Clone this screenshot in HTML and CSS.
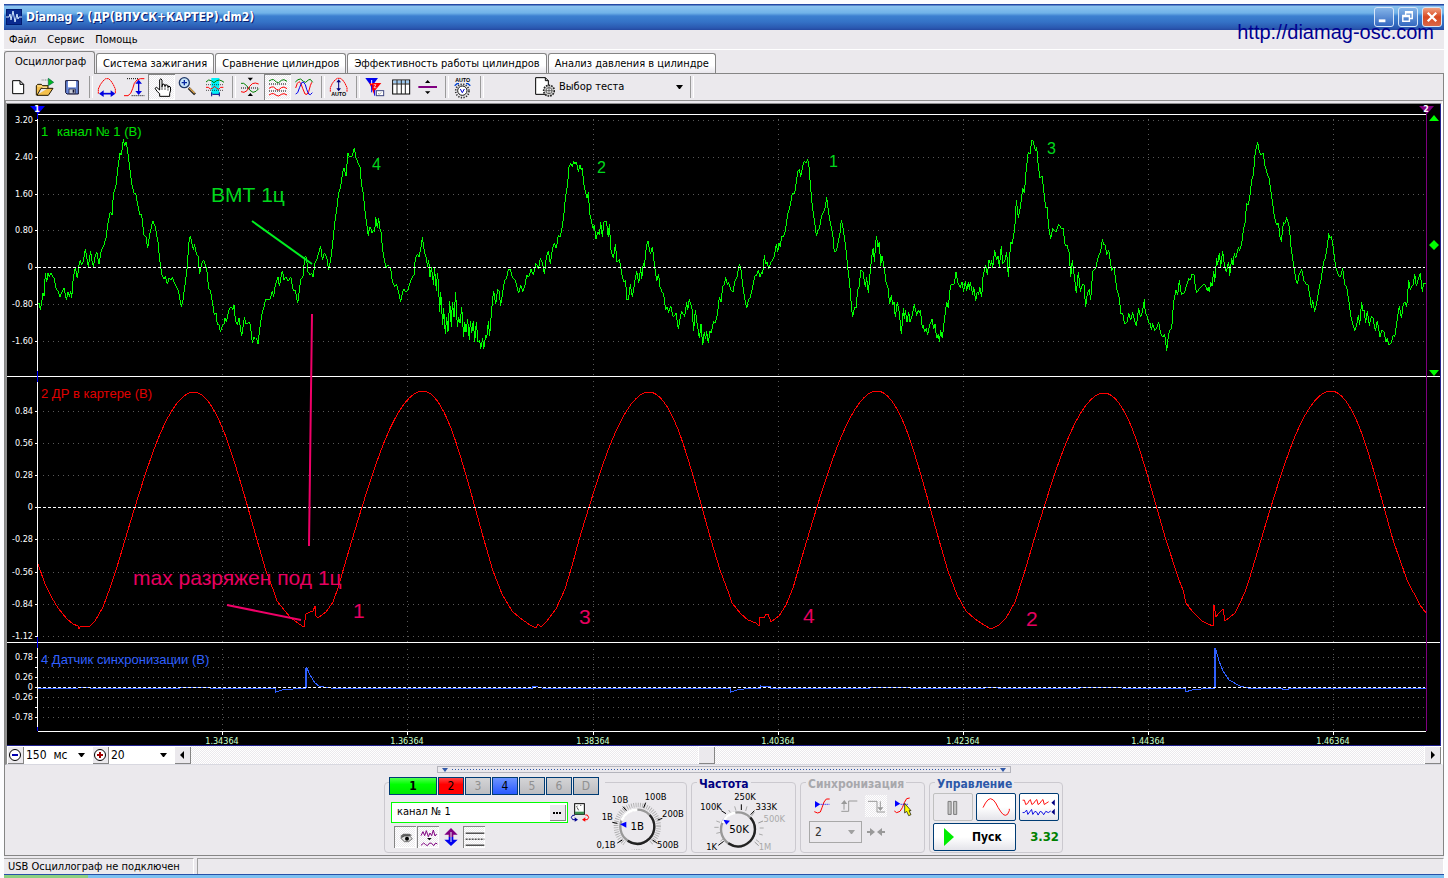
FILE: index.html
```html
<!DOCTYPE html>
<html lang="ru">
<head>
<meta charset="utf-8">
<title>Diamag 2</title>
<link rel="stylesheet" href="styles.css">
</head>
<body>
<div class="window">
  <header class="titlebar">
    <svg class="app-icon" viewBox="0 0 16 16" aria-hidden="true"><rect width="16" height="16" fill="#001a70"/><rect x="1" y="1" width="14" height="14" fill="#0a2a90"/><path d="M0 8h3l1-3 1 6 2-9 2 11 2-8 1 5 1-2h3" fill="none" stroke="#cfe6ff" stroke-width="1"/></svg>
    <h1 class="title">Diamag 2 (ДР(ВПУСК+КАРТЕР).dm2)</h1>
    <div class="window-buttons">
      <button class="win-btn" aria-label="Свернуть"><svg viewBox="0 0 19 19"><path d="M4 12h7v3H4z" fill="#fff"/></svg></button>
      <button class="win-btn" aria-label="Восстановить"><svg viewBox="0 0 19 19"><path d="M7 7V4h7v7h-3M7 5h7M4 8h7v6H4zM4 9h7" fill="none" stroke="#fff" stroke-width="1.5"/></svg></button>
      <button class="win-btn win-close" aria-label="Закрыть"><svg viewBox="0 0 19 19"><path d="M5 5l9 9M14 5l-9 9" stroke="#fff" stroke-width="2.4"/></svg></button>
    </div>
    <a class="site-link" href="http://diamag-osc.com">http://diamag-osc.com</a>
  </header>
  <nav class="menu">
    <button>Файл</button><button>Сервис</button><button>Помощь</button>
  </nav>
  <div class="tabs" role="tablist">
    <button class="tab tab-active" role="tab" aria-selected="true">Осциллограф</button>
    <button class="tab" role="tab">Система зажигания</button>
    <button class="tab" role="tab">Сравнение цилиндров</button>
    <button class="tab" role="tab">Эффективность работы цилиндров</button>
    <button class="tab" role="tab">Анализ давления в цилиндре</button>
  </div>
  <main class="page">
    <div class="toolbar">
      <button class="tool" aria-label="Новый"><svg viewBox="15 222 81 78"><path d="M38 242h22l11 11v28H38zM60 242v11h11" fill="#fff" stroke="#000" stroke-width="3"/></svg></button>
      <button class="tool" aria-label="Открыть"><svg viewBox="96 222 81 78"><path d="M109 286v-29l4-4h11l4 4h16v8M144 265h-21l-12 21h34l14-21z" fill="#f4c04c" stroke="#221800" stroke-width="3"/><path d="M112 258h12l4 4h13" stroke="#ffe9a8" stroke-width="3" fill="none"/><path d="M125 240h19" stroke="#555" stroke-width="2" stroke-dasharray="3 2"/><path d="M145 235v22l16-10z" fill="#00b820" stroke="#064" stroke-width="2"/></svg></button>
      <button class="tool" aria-label="Сохранить"><svg viewBox="177 222 81 78"><path d="M197 242h38v40h-34l-4-4z" fill="#6a88d8" stroke="#101030" stroke-width="3"/><path d="M204 243h24v19h-24z" fill="#fff"/><path d="M207 267h19v14h-19z" fill="#c8ccd8" stroke="#101030" stroke-width="2"/><path d="M218 269h5v9h-5z" fill="#101030"/></svg></button>
      <span class="sep"></span>
      <button class="tool" aria-label="Период"><svg viewBox="282 222 81 78"><path d="M295 281v-14l6-13 8-11 8-7h9l7 7 7 11 6 13v14" fill="none" stroke="#f00" stroke-width="3" stroke-dasharray="6 1"/><path d="M307 281h30" stroke="#0000e0" stroke-width="5"/><path d="M311 271v20l-14-10zM332 271v20l14-10z" fill="#0000e0"/></svg></button>
      <button class="tool" aria-label="Амплитуда"><svg viewBox="363 222 81 78"><path d="M381 236h36M395 287h38" stroke="#000" stroke-width="3" stroke-dasharray="3 3"/><path d="M372 287h12l8-7 6-14 5-16 8-10 10-4h12" fill="none" stroke="#f00" stroke-width="3"/><path d="M416 245v34" stroke="#0000c0" stroke-width="4"/><path d="M406 251h20l-10-12zM406 273h20l-10 12z" fill="#0000e0"/></svg></button>
      <button class="tool pressed" aria-label="Рука" aria-pressed="true"><svg viewBox="444 222 81 78"><path d="M479 289v-8l-7-6-7-10 5-3 9 8v-30l3-4 4 4v20l2-8 5 1 2 7 2-6 6 2 1 7 2-5 5 3 1 9-3 11v8z" fill="#fff" stroke="#000" stroke-width="3"/><path d="M486 258v12M495 262v8M504 265v7" stroke="#000" stroke-width="2"/></svg></button>
      <button class="tool" aria-label="Лупа"><svg viewBox="525 222 81 78"><path d="M566 264l19 19" stroke="#222" stroke-width="8"/><path d="M568 264l16 16" stroke="#e0a850" stroke-width="4"/><circle cx="553" cy="248" r="15" fill="#c8e4fa" stroke="#203868" stroke-width="4"/><path d="M545 248h16M553 240v16" stroke="#0828a0" stroke-width="4"/></svg></button>
      <button class="tool" aria-label="Область"><svg viewBox="606 222 81 78"><path d="M634 234h24v48h-24z" fill="#00f0f8"/><path d="M618 246l8-6 8 2 8 6 8-6 8-2 8 3 6 4" fill="none" stroke="#008000" stroke-width="3"/><path d="M618 254h54M618 271h54" stroke="#000" stroke-width="2" stroke-dasharray="3 3"/><path d="M618 262h7l6 5 6-2 7-6 6 6 6 3 6-6h8" fill="none" stroke="#f00" stroke-width="3"/><path d="M635 277v12M658 277v12M637 283h20" stroke="#000080" stroke-width="3"/></svg></button>
      <span class="sep"></span>
      <button class="tool" aria-label="Наложить"><svg viewBox="711 222 81 78"><path d="M723 250h8l9 7 10 14 9 6 9-3 8-8" fill="none" stroke="#008000" stroke-width="3"/><path d="M723 275l9 2 9-5 8-13 8-8 9-2 10 3" fill="none" stroke="#f00" stroke-width="3"/><path d="M723 264h54" stroke="#000" stroke-width="3" stroke-dasharray="3 3"/><path d="M743 233h16l-8 9zM743 288h16l-8-9z" fill="#000"/></svg></button>
      <button class="tool pressed" aria-label="Раздельно" aria-pressed="true"><svg viewBox="792 222 81 78"><g fill="none" stroke-width="3"><path d="M807 243l8-4h6l8 7 7 2 8-7 8-2 9 5" stroke="#008000"/><path d="M807 265l8-4h6l8 7 7 2 8-7 8-2 9 5" stroke="#f00"/><path d="M807 285l8-4h6l8 5 7 2 8-5 8-2 9 4" stroke="#f00"/><path d="M807 252h54M807 273h54" stroke="#000" stroke-dasharray="3 3"/></g></svg></button>
      <button class="tool" aria-label="Сравнить"><svg viewBox="873 222 81 78"><g fill="none" stroke-width="3"><path d="M886 246l8-7 8-2 8 7 7 3 8-7 6-2 7 9" stroke="#008000"/><path d="M887 264l5-14 5-5 5 4 6 16 7 17 6 1 5-8 5-18 4-10" stroke="#f00"/><path d="M887 282l6-4 6-16 6-14 5-2 6 8 4 14 6 14 5 2 6-6" stroke="#0000f0"/></g></svg></button>
      <span class="sep"></span>
      <button class="tool" aria-label="Автомасштаб"><svg viewBox="978 222 81 78"><path d="M991 275v-12l6-13 8-10 7-5h9l7 5 7 10 6 13v12" fill="none" stroke="#f00" stroke-width="3" stroke-dasharray="6 1"/><path d="M1016 242v27" stroke="#000080" stroke-width="3"/><path d="M1009 247h14l-7-9zM1009 265h14l-7 9z" fill="#000080"/><text x="1016" y="289" class="auto-label">AUTO</text></svg></button>
      <span class="sep"></span>
      <button class="tool" aria-label="Маркеры"><svg viewBox="1083 222 81 78"><path d="M1096 234h38l-19 26z" fill="#0000f0"/><path d="M1108 249h36l-20 24v14" fill="#f00"/><path d="M1115 255v22M1124 270v17" stroke="#00f" stroke-width="3"/><path d="M1115 240v11" stroke="#fff" stroke-width="3"/><path d="M1121 254h7l-6 9h7" stroke="#fff" stroke-width="2" fill="none"/><rect x="1129" y="272" width="22" height="15" fill="#fff" stroke="#404880" stroke-width="3"/><path d="M1134 280l4 3 6-6" stroke="#777" stroke-width="2" fill="none"/></svg></button>
      <button class="tool" aria-label="Таблица"><svg viewBox="1164 222 81 78"><rect x="1178" y="240" width="51" height="42" fill="#fff" stroke="#000" stroke-width="3"/><path d="M1180 242h47v8h-47z" fill="#9cc8f0"/><path d="M1178 252h51M1191 240v42M1204 240v42M1216 240v42" stroke="#222" stroke-width="3"/></svg></button>
      <button class="tool" aria-label="Разделитель"><svg viewBox="1245 222 81 78"><path d="M1255 261h56" stroke="#800080" stroke-width="6"/><path d="M1275 249h16l-8-9zM1275 274h16l-8 8z" fill="#000"/></svg></button>
      <span class="sep"></span>
      <button class="tool" aria-label="Автонастройка"><svg viewBox="1350 222 81 78"><text x="1388" y="246" class="auto-label">AUTO</text><circle cx="1387" cy="273" r="20" fill="none" stroke="#333" stroke-width="5" stroke-dasharray="4 4"/><circle cx="1387" cy="272" r="14" fill="#fff" stroke="#111" stroke-width="3"/><path d="M1381 267l6 11 6-11" stroke="#0000d0" stroke-width="3" fill="none"/><path d="M1364 257l7-6h6M1398 251h6l7 6" fill="none" stroke="#0040d0" stroke-width="4"/></svg></button>
      <span class="sep"></span>
      <label class="test-pick">
        <svg viewBox="0 0 60 60"><path d="M2 2h29l9 9v41H2z" fill="#fff" stroke="#000" stroke-width="3"/><path d="M31 2v9h9" fill="none" stroke="#000" stroke-width="3"/><circle cx="42" cy="41" r="16" fill="#ccc" stroke="#222" stroke-width="5" stroke-dasharray="5 3"/><circle cx="42" cy="41" r="9" fill="#eee" stroke="#333" stroke-width="2"/><path d="M42 31v20M32 41h20" stroke="#333" stroke-width="2"/></svg>
        <select aria-label="Выбор теста"><option>Выбор теста</option></select>
      </label>
      <span class="sep"></span>
    </div>
    <div class="scope">
      <svg class="chart" viewBox="7 104 1434 642" role="img" aria-label="Осциллограммы">
        <defs>
          <path id="vgrid" d="M222.500 119v257M407.500 119v257M593.500 119v257M778.500 119v257M963.500 119v257M1148.500 119v257M1333.500 119v257M222.500 381v261M407.500 381v261M593.500 381v261M778.500 381v261M963.500 381v261M1148.500 381v261M1333.500 381v261M222.500 649v82M407.500 649v82M593.500 649v82M778.500 649v82M963.500 649v82M1148.500 649v82M1333.500 649v82"/>
        </defs>
        <rect x="7" y="104" width="1434" height="642" fill="#000"/>
        <g class="grid">
          <use href="#vgrid"/>
          <path d="M43 120.500H1425M43 157.500H1425M43 194.500H1425M43 230.500H1425M43 304.500H1425M43 341.500H1425M43 411.500H1425M43 443.500H1425M43 475.500H1425M43 539.500H1425M43 572.500H1425M43 604.500H1425M43 636.500H1425M43 657.500H1425M43 667.500H1425M43 677.500H1425M43 697.500H1425M43 707.500H1425M43 717.500H1425"/>
        </g>
        <path class="axis" d="M38 114.500H1426M7 376.500H1440M7 642.500H1440M38 731.500H1426M37.500 119V371M37.500 382V637M37.500 648V727M35 120.500h3M35 157.500h3M35 194.500h3M35 230.500h3M35 267.500h3M35 304.500h3M35 341.500h3M35 411.500h3M35 443.500h3M35 475.500h3M35 507.500h3M35 539.500h3M35 572.500h3M35 604.500h3M35 636.500h3M35 657.500h3M35 667.500h3M35 677.500h3M35 687.500h3M35 697.500h3M35 707.500h3M35 717.500h3M222.500 732v3M407.500 732v3M593.500 732v3M778.500 732v3M963.500 732v3M1148.500 732v3M1333.500 732v3"/>
        <path class="marker-one" d="M37.500 112v7M37.500 371v11M37.500 637v11M37.500 727v4"/>
        <path d="M30 106h15l-7 8z" fill="#00f"/>
        <path class="marker-two" d="M1426.500 112V731"/>
        <path d="M1419 106h15l-7 8z" fill="#800080"/>
        <text class="marker-text" x="37" y="112">1</text>
        <text class="marker-text" x="1426" y="112">2</text>
        <path class="frame-edge" d="M1440.500 104V746M7 745.500H1441"/>
        <path d="M1429 121h10l-5-6zM1429 370h10l-5 6zM1429 245l5-5 5 5-5 5z" fill="#0f0"/>
        <g class="trace green">
          <g transform="translate(0 100) scale(.33333)">
            <polyline points="115,612 118,610 121,630 126,600 129,578 132,588 136,520 140,545 144,520 148,530 152,518 158,530 162,535 166,555 170,570 175,575 180,592 186,575 192,565 199,600 204,575 208,590 212,572 215,595 220,530 226,503 232,535 238,488 242,480 244,495 250,483 256,448 260,470 265,500 272,452 275,478 280,500 285,470 290,455 297,492 304,450 310,440 318,415 323,375 331,335 336,345 340,285 348,255 354,200 360,160 364,165 370,118 374,138 378,125 382,145 388,195 396,255 402,280 407,280 415,325 420,345 425,345 432,405 438,410 443,445 449,405 458,362 465,378 474,425 479,480 485,522 493,538 496,528 502,552 507,535 513,540 517,532 524,550 536,575 544,622 549,600 555,555 562,500 566,430 571,408 577,435 581,450 583,432 590,465 594,468 599,523 605,490 611,480 616,495 620,505 626,565 631,572 637,605 643,645 648,640 652,675 658,675 661,697 665,682 672,672 675,655 679,665 688,625 694,620 698,630 702,615 706,660 712,675 717,655 725,708 733,652 738,672 743,672 747,665 751,675 757,728 762,712 767,718 770,715 774,732 780,680 787,635 792,620 797,598 810,598 817,572 821,590 826,555 834,530 838,558 847,512 852,540 858,530 863,542 868,540 872,530 880,572 886,570 893,610 898,572 902,540 909,530 914,472 919,470 924,515 930,525 935,520 939,530 945,490 950,480 957,455 962,438 967,480 973,460 980,470 986,510 992,480 998,430 1004,370 1010,330 1016,278 1022,260 1028,215 1032,205 1038,228 1044,160 1049,172 1056,168 1063,145 1068,175 1075,190 1080,200 1084,250 1090,280 1096,345 1099,365 1105,408 1108,385 1112,380 1115,400 1120,390 1124,395 1127,350 1132,385 1136,355 1140,388"/>
          </g>
          <g transform="translate(380 120) scale(.33333)">
            <polyline points="0,328 3,335 8,390 14,425 19,445 22,435 28,440 32,445 37,485 44,500 49,492 56,518 62,547 68,515 72,508 78,515 84,510 90,488 97,472 102,465 106,415 113,402 117,412 123,380 127,352 133,395 138,410 143,440 146,420 150,470 154,442 158,470 161,495 163,442 166,470 169,512 172,460 175,485 179,575 182,515 188,615 191,565 196,643 200,590 204,635 209,542 214,620 217,545 222,592 227,517 232,622 236,592 240,610 245,562 251,652 254,605 258,635 263,598 268,660 271,603 275,640 280,603 284,665 289,605 294,665 299,660 302,687 308,655 311,688 317,645 320,655 325,604 329,647 335,570 337,545 341,513 347,553 353,508 357,512 362,557 369,510 374,480 380,475 385,448 391,447 397,472 405,480 411,500 416,520 422,495 428,515 434,500 440,465 446,472 453,447 460,465 467,430 471,435 475,448 481,415 488,430 493,463 499,412 505,392 511,433 517,388 523,370 529,385 535,345 540,350 545,330 551,290 556,235 563,190 567,140 572,130 577,140 581,122 585,132 589,125 595,155 600,135 604,150 607,143 611,190 616,215 621,235 625,217 629,280 637,315 640,328 643,315 648,358 654,335 658,345 662,307 667,352 671,307 679,302 685,352 688,312 693,390 700,415 706,373 711,425 718,418 725,460 731,487 737,480 740,540 745,540 751,493 757,532 764,487 770,453 776,490 782,445 785,478 790,430 793,440 799,380 804,364 811,402 817,380 825,447 830,482 836,463 840,500 847,518 851,522 857,570 862,560 866,578 872,557 880,592 888,580 895,628 901,590 905,573 914,590 920,547 923,570 928,538 934,560 936,565 941,632 946,570 952,615 958,655 963,612 968,676 973,635 977,658 980,633 985,670 990,632 994,640 1000,605 1006,608 1012,585 1018,530 1023,545 1028,500 1033,493 1037,472 1042,495 1046,487 1052,510 1059,515 1064,485 1070,475 1078,433 1082,440 1087,485 1093,530 1100,565 1105,540 1110,535 1118,500 1125,467 1130,465 1135,450 1140,470"/>
          </g>
          <g transform="translate(760 120) scale(.33333)">
            <polyline points="0,470 5,455 8,462 13,405 17,433 21,425 26,448 32,428 37,420 43,408 49,373 53,395 57,370 61,380 65,348 70,350 76,332 83,283 90,258 97,220 104,220 110,180 113,155 118,148 122,170 128,140 133,122 138,130 143,118 147,140 152,205 157,260 163,300 169,348 174,330 178,328 184,290 190,278 195,265 200,232 206,280 211,310 218,340 223,397 230,390 236,360 240,340 244,300 250,330 257,380 263,440 269,490 275,570 278,590 284,560 288,565 293,510 298,500 302,450 309,457 316,500 320,472 325,520 331,450 337,395 340,385 343,425 349,348 354,380 358,365 362,437 366,408 373,445 378,485 384,505 389,553 394,525 398,555 402,545 406,592 412,545 418,580 424,643 430,565 433,598 436,570 441,607 446,575 450,607 457,585 463,553 470,587 475,570 478,580 481,570 487,625 491,615 493,637 499,625 503,645 509,615 516,598 521,628 525,612 530,655 535,643 538,665 542,630 547,655 553,600 560,545 565,565 569,515 573,495 583,492 588,455 593,487 601,503 606,487 611,515 616,482 620,512 625,487 628,510 631,485 638,525 641,500 647,542 652,515 656,525 659,500 665,532 669,470 673,450 677,435 682,465 687,420 692,437 695,420 698,445 704,390 710,420 714,408 718,440 724,377 728,432 735,420 740,397 745,472 752,365 756,372 764,330 769,240 775,295 782,255 788,205 793,220 799,145 805,95 810,103 815,60 820,65 826,92 830,80 834,130 840,175 846,168 851,210 857,265 861,260 866,320 872,358 878,325 888,335 896,312 903,325 909,325 916,378 921,375 928,400 932,472 937,420 943,470 949,520 955,455 961,515 967,495 972,495 977,562 982,520 988,508 992,540 998,455 1007,445 1015,410 1022,395 1027,358 1032,375 1036,375 1040,405 1046,390 1055,452 1062,440 1070,505 1078,535 1083,582 1088,580 1094,613 1101,605 1106,580 1112,600 1118,577 1123,600 1129,618 1136,563 1141,592 1147,578 1153,538"/>
          </g>
          <g transform="translate(1080 100) scale(.33333)">
            <polyline points="193,598 196,640 202,650 206,668 210,670 214,690 218,670 224,693 230,683 236,667 242,700 248,712 254,702 260,752 265,710 269,690 275,685 281,605 288,570 293,585 298,540 304,583 313,580 320,555 326,535 332,540 336,522 342,525 346,560 350,578 358,567 365,558 374,552 382,572 385,562 388,577 392,545 396,558 401,512 404,545 410,475 413,495 418,458 422,502 428,452 434,502 439,515 446,485 449,527 455,475 459,495 463,460 467,475 475,442 479,452 485,430 490,390 495,370 500,310 505,315 510,285 515,240 520,225 526,155 533,127 538,155 543,165 549,158 555,197 560,215 567,235 572,270 578,310 583,350 590,375 595,368 600,410 604,425 610,368 615,370 620,352 628,380 633,440 640,490 647,535 652,553 657,525 665,508 671,540 678,552 684,555 690,590 694,625 698,600 704,635 710,610 718,560 723,540 730,490 737,470 743,430 746,400 750,415 754,408 760,445 764,480 768,505 773,520 779,532 784,525 788,503 794,555 800,560 806,600 813,650 819,675 824,692 829,680 835,645 839,675 845,605 848,632 852,630 857,668 862,633 868,677 874,648 879,655 886,693 892,662 900,710 906,690 912,695 918,725 922,715 926,735 934,728 940,705 944,712 950,670 958,617 964,655 970,612 976,605 980,622 986,540 991,570 995,560 1000,552 1004,522 1009,558 1015,538 1021,520 1027,577 1031,548 1038,553"/>
          </g>
        </g>
        <path class="trace red" d="M38 564L45 584L52 598L58 608L67 619L73 624L78 626L79 629L80 627L90 626L95 621L103 607L110 588L117 567L125 540
          C145 473 168 392 194 392C218 392 238 473 257 540L266 571L274 592L277 601L285 611L290 617L299 624L304 627L306 614L310 612L313 611L315 606L316 616L318 618L326 612L333 602L339 585L344 567L352 540
          C372 473 396 391 423 391C447 391 465 473 484 540L493 571L502 594L512 611L520 618L530 625L536 628L538 624L541 627L547 621L556 609L565 589L572 566L579 540
          C599 473 623 392 649 392C674 392 692 473 711 540L720 570L729 594L732 603L741 614L748 620L756 623L759 626L760 617L764 618L766 614L768 614L771 622L779 616L786 605L793 588L799 567L807 540
          C827 473 851 391 877 391C902 391 920 473 939 540L948 571L957 595L966 611L975 619L984 625L991 629L999 625L1006 618L1015 602L1024 574L1034 540
          C1054 473 1078 393 1104 393C1129 393 1146 473 1166 540L1179 580L1183 590L1186 603L1192 611L1202 621L1208 624L1213 626L1214 605L1216 617L1219 613L1223 609L1225 621L1230 617L1235 613L1240 603L1245 592L1249 580L1261 540
          C1281 473 1304 391 1331 391C1356 391 1374 473 1393 540L1407 580L1412 590L1415 595L1420 605L1426 613"/>
        <path class="trace blue" d="M38 688.500H78M78 687.500H90M90 688.500H180M180 687.500H210M210 688.500H275.500V692L282 690L293 689L304 688.500H305.500V668V688M306.500 688V667L310 675L315 683L319 686L327 687.500L335 688.500H532V686.500H536L544 688.500H730.500V692L737 690L748 688.500H760V685.500L762 686.500H770L771 688.500H870M870 687.500H910M910 688.500H985M985 687.500H998M998 688.500H1080M1080 687.500H1122M1122 688.500H1185V692L1192 690L1201 689L1212 688.500H1214.500V668V648M1215.500 688V648L1219 661L1223 671L1229 680L1240 686L1250 688.500H1282V689.500H1288V688.500H1426"/>
        <path class="zero" d="M38 267.500H1425M38 507.500H1425M38 687.500H1425"/>
        <g class="scale">
          <text x="33" y="123">3.20</text><text x="33" y="160">2.40</text><text x="33" y="197">1.60</text><text x="33" y="233">0.80</text><text x="33" y="270">0</text><text x="33" y="307">-0.80</text><text x="33" y="344">-1.60</text>
          <text x="33" y="414">0.84</text><text x="33" y="446">0.56</text><text x="33" y="478">0.28</text><text x="33" y="510">0</text><text x="33" y="542">-0.28</text><text x="33" y="575">-0.56</text><text x="33" y="607">-0.84</text><text x="33" y="639">-1.12</text>
          <text x="33" y="660">0.78</text><text x="33" y="680">0.26</text><text x="33" y="690">0</text><text x="33" y="700">-0.26</text><text x="33" y="720">-0.78</text>
        </g>
        <g class="times">
          <text x="222" y="744">1.34364</text><text x="407" y="744">1.36364</text><text x="593" y="744">1.38364</text><text x="778" y="744">1.40364</text><text x="963" y="744">1.42364</text><text x="1148" y="744">1.44364</text><text x="1333" y="744">1.46364</text>
        </g>
        <g class="channel-name">
          <text x="41" y="136" fill="#00e000">1</text><text x="57" y="136" fill="#00e000">канал № 1 (В)</text>
          <text x="41" y="398" fill="#e00000">2 ДР в картере (В)</text>
          <text x="41" y="664" fill="#3060ff">4 Датчик синхронизации (В)</text>
        </g>
        <g class="note note-green">
          <text x="211" y="202" class="note-big">ВМТ 1ц</text>
          <text x="372" y="170">4</text><text x="597" y="173">2</text><text x="829" y="167">1</text><text x="1047" y="154">3</text>
          <path d="M252 221L312 264"/>
        </g>
        <g class="note note-pink">
          <text x="133" y="585" class="note-big">max разряжен под 1ц</text>
          <text x="353" y="618" class="note-big">1</text><text x="579" y="624" class="note-big">3</text><text x="803" y="623" class="note-big">4</text><text x="1026" y="626" class="note-big">2</text>
          <path d="M312 314L309 546M227 605L301 620"/>
        </g>
      </svg>
      <div class="timebar">
        <button class="small-btn" aria-label="Уменьшить"><svg viewBox="0 0 17 18"><circle cx="8" cy="9" r="5.500" fill="#fff" stroke="#000"/><path d="M5 9h6" stroke="#0000b0" stroke-width="2"/></svg></button>
        <select class="time-select" aria-label="Развёртка"><option>150&nbsp; мс</option></select>
        <button class="small-btn" aria-label="Увеличить"><svg viewBox="0 0 17 18"><circle cx="8" cy="9" r="5.500" fill="#fff" stroke="#000"/><path d="M5 9h6M8 6v6" stroke="#a00000" stroke-width="2"/></svg></button>
        <select class="zoom-select" aria-label="Масштаб"><option>20</option></select>
        <button class="small-btn" aria-label="Влево"><svg viewBox="0 0 17 18"><path d="M10 5v8L6 9z"/></svg></button>
        <input class="scroll" type="range" min="0" max="1000" value="417" aria-label="Прокрутка">
        <button class="small-btn" aria-label="Вправо"><svg viewBox="0 0 17 18"><path d="M7 5v8l4-4z"/></svg></button>
      </div>
    </div>
    <section class="panel">
      <div class="splitter"><i class="caret"></i><span class="dots"></span><i class="caret"></i></div>
      <div class="groups">
        <div class="group channel-group">
          <div class="channel-side">
            <div class="channels">
              <button class="ch ch-1">1</button><button class="ch ch-2">2</button><button class="ch" disabled>3</button><button class="ch ch-4">4</button><button class="ch" disabled>5</button><button class="ch" disabled>6</button><button class="ch" disabled>D</button>
            </div>
            <div class="name-row">
              <div class="name-box"><input type="text" value="канал № 1" aria-label="Имя канала"><button class="more" aria-label="Выбрать"><svg viewBox="0 0 17 17"><path d="M4 8h2v2H4zM7 8h2v2H7zM10 8h2v2h-2z"/></svg></button></div>
              <button class="icon-btn" aria-label="Калибровка"><svg viewBox="570 126 66 66"><rect x="584" y="134" width="29" height="32" fill="#fff" stroke="#000" stroke-width="3"/><path d="M585 158h27v8h-27z" fill="#3a9050"/><path d="M589 144l4-4M600 139h4M596 154l-5-9" stroke="#000" stroke-width="2" fill="none"/><path d="M584 169h-6l-4 6 4 7h8" fill="none" stroke="#000090" stroke-width="3"/><path d="M584 175v13l10-6z" fill="#000090"/><path d="M616 168h6l4 7-4 7h-8" fill="none" stroke="#f00" stroke-width="3"/><path d="M616 175v13l-10-6z" fill="#f00"/></svg></button>
            </div>
            <div class="view-row">
              <button class="icon-btn pressed" aria-label="Видимость"><svg viewBox="42 198 66 66"><path d="M61 228l9-7h18l9 5-6 1-8 11H72z" fill="#666"/><path d="M62 234l12-6h15l8 8-11 9H73z" fill="#ddd" stroke="#333" stroke-width="2"/><circle cx="81" cy="236" r="6" fill="#000"/></svg></button>
              <button class="icon-btn pressed" aria-label="Сглаживание"><svg viewBox="114 198 66 66"><path d="M126 227l6-12 5 12 5-15 6 18 5-11 5 8 5-17 5 18 5-6M126 256l8-7 6 5 5 3 7-8 6 1 6 7 6-8 5 3" fill="none" stroke="#800080" stroke-width="3"/><path d="M144 234h14l-7 7z"/></svg></button>
              <button class="icon-btn" aria-label="Сдвиг"><svg viewBox="183 198 66 66"><path d="M216 204l20 20h-13v7h-14v-7h-13z" fill="#800080"/><path d="M216 258l20-19h-13v-8h-14v8h-13z" fill="#0000f0"/><path d="M216 216v30" stroke="#ebe9ed" stroke-width="3"/></svg></button>
              <button class="icon-btn pressed" aria-label="Линии"><svg viewBox="252 198 66 66"><path d="M260 219.500h56M260 255.500h56" stroke="#000" stroke-width="3"/><path d="M260 237.500h56" stroke="#000" stroke-width="3" stroke-dasharray="6 3"/></svg></button>
            </div>
          </div>
          <svg class="knob knob-volt" viewBox="636 90 282 186" role="img" aria-label="1В">
            <circle cx="769" cy="199" r="64" fill="none" stroke="#aaa" stroke-width="14" stroke-dasharray="3 5" pathLength="480"/>
            <path d="M724 259l22-28 24 10 24-10 26 36H714z" fill="#ebe9ed"/>
            <circle cx="769" cy="200" r="51" fill="#ebe9ed" stroke="#999" stroke-width="7"/>
            <path d="M722 182a50 50 0 0 1 47-33" fill="none" stroke="#fff" stroke-width="8"/>
            <path d="M806 165a51 51 0 0 1 0 70q-32 30-66 7" fill="none" stroke="#222" stroke-width="7"/>
            <path d="M709 249l15-9M694 187l15 3M726 140l10 12M794 128l-6 15M844 175l-14 5M815 240l14 10" stroke="#000" stroke-width="3"/>
            <path d="M717 193l19-8v18z" fill="#00f"/>
            <g class="knob-text"><text x="769" y="210" class="knob-value">1В</text><text x="717" y="130">10В</text><text x="824" y="121">100В</text><text x="679" y="181">1В</text><text x="876" y="172">200В</text><text x="675" y="264">0,1В</text><text x="861" y="264">500В</text></g>
          </svg>
        </div>
        <div class="group freq-group">
          <h2 class="legend">Частота</h2>
          <svg class="knob knob-freq" viewBox="39 84 306 186" role="img" aria-label="50K">
            <g stroke="#aaa" stroke-width="3"><path d="M112 211l12-3M106 193h13M112 174l11 4M124 235l9-8M149 141l7 10M167 130l4 13M204 130l-4 14M226 147l-8 12M242 195h12M240 213l11 3M231 230l10 8"/></g>
            <circle cx="177" cy="199" r="51" fill="#ebe9ed" stroke="#999" stroke-width="7"/>
            <path d="M131 180a50 50 0 0 1 38-31" fill="none" stroke="#fff" stroke-width="8"/>
            <path d="M214 164a51 51 0 0 1 0 70q-32 30-66 7" fill="none" stroke="#222" stroke-width="7"/>
            <path d="M118 247l16-12M127 143l14 9M187 124v17M226 143l-11 12" stroke="#000" stroke-width="3"/>
            <path d="M252 174l-14 6M239 248l-12-11" stroke="#999" stroke-width="3"/>
            <path d="M133 170l20 3-11 12z" fill="#00f"/>
            <g class="knob-text"><text x="180" y="210" class="knob-value">50K</text><text x="198" y="112">250K</text><text x="96" y="142">100K</text><text x="262" y="142">333K</text><text x="286" y="178" fill="#aaa">500K</text><text x="98" y="262">1K</text><text x="258" y="260" fill="#aaa">1M</text></g>
          </svg>
        </div>
        <div class="group sync-group">
          <h2 class="legend legend-off">Синхронизация</h2>
          <div class="sync-icons">
            <button class="icon-btn" aria-label="Уровень"><svg viewBox="393 102 66 66"><path d="M403 152l10 4 8-3 5-13 6-17 7-9h10" fill="none" stroke="#f00" stroke-width="3"/><path d="M422 130h26" stroke="#00f" stroke-width="3" stroke-dasharray="3 3"/><path d="M405 120v20l16-10z" fill="#00f"/></svg></button>
            <button class="icon-btn" aria-label="Фронт"><svg viewBox="474 102 66 66"><path d="M484 151h22v-31h26M492 146v-21" fill="none" stroke="#999" stroke-width="3"/><path d="M483 129h19l-9-12z" fill="#999"/></svg></button>
            <button class="icon-btn raised" aria-label="Спад"><svg viewBox="555 102 66 66"><path d="M564 121h27v32h24M601 121v22" fill="none" stroke="#999" stroke-width="3"/><path d="M592 139h18l-9 11z" fill="#999"/></svg></button>
            <button class="icon-btn" aria-label="Курсор"><svg viewBox="636 102 66 66"><path d="M643 150l7 5 10-4 7-11 6-15 7-12 9-2" fill="none" stroke="#f00" stroke-width="3"/><path d="M662 130h24" stroke="#00f" stroke-width="3" stroke-dasharray="3 3"/><path d="M645 118v19l16-9z" fill="#00f"/><path d="M674 127v29l6-5 6 13 7-3-6-12h6z" fill="#ff0" stroke="#000" stroke-width="2"/></svg></button>
          </div>
          <div class="sync-row">
            <select class="sync-select" aria-label="Канал синхронизации" disabled><option>2</option></select>
            <svg class="squeeze" viewBox="0 0 18 12" aria-hidden="true"><path d="M0 5h3V2l5 4-5 4V7H0zM18 5h-3V2l-5 4 5 4V7h3z" fill="#999"/></svg>
          </div>
        </div>
        <div class="group run-group">
          <h2 class="legend legend-blue">Управление</h2>
          <div class="run-grid">
            <button class="run-btn" disabled aria-label="Пауза"><svg viewBox="0 0 120 84"><path d="M44 24h10v42H44zM62 24h10v42H62z" fill="#c4c4c4" stroke="#777" stroke-width="3"/></svg></button>
            <button class="run-btn" aria-label="Синус"><svg viewBox="888 96 120 84"><path d="M906 140l8-15 8-10 8-4 9 4 8 10 8 15 9 14 7 8 7 3 7-3 6-12v-6" fill="none" stroke="#f00" stroke-width="3"/></svg></button>
            <button class="run-btn" aria-label="Все каналы"><svg viewBox="1017 96 120 84"><path d="M1024 116h6l4 14 6-3 5-9 4-4 5 16 6-4 6-9 4-3 4 16 6-4 6-9 4-3 4 16 6-4 8-5" fill="none" stroke="#f00" stroke-width="3"/><path d="M1024 156h6l7-8 4 14 6-8 6-8 4 16 7-10 6 3 4 9 7-12 6 3 5 8 7-11 8 4 8-5" fill="none" stroke="#0000e0" stroke-width="3"/><path d="M1128 114v20l-11-10zM1128 144v20l-11-10z" fill="#000080"/></svg></button>
            <button class="run-btn start"><svg viewBox="0 0 10 18"><path d="M0 0v18l10-9z" fill="#0e0"/></svg>Пуск</button>
            <output class="value">3.32</output>
          </div>
        </div>
      </div>
    </section>
  </main>
  <footer class="status"><span class="cell">USB Осциллограф не подключен</span><span class="cell"></span></footer>
</div>
<div class="taskbar"><span class="start-edge"></span></div>
</body>
</html>
```
FILE: styles.css
```css
* { box-sizing: border-box; }
html { background: #fcfcfe; }
body {
  margin: 0;
  padding: 4px 4px 0;
  font: 11px/14px "DejaVu Sans Condensed", "DejaVu Sans", sans-serif;
  color: #000;
}
button, input, select { font: inherit; color: inherit; margin: 0; padding: 0; border: 0; background: none; border-radius: 0; }
svg { display: block; }
select { appearance: none; }
.window { background: #ebe9ed; }

.titlebar {
  position: relative;
  display: flex;
  align-items: center;
  gap: 4px;
  height: 26px;
  padding: 0 2px;
  background: linear-gradient(#2448a4 0 1px, #8cc4f0 2px, #70b2e8 9px, #3c80d0 12px, #3472c6 18px, #2a58b0 24px, #2448a0);
}
.app-icon { width: 16px; height: 16px; }
.title {
  flex: 1;
  margin: 0;
  font: bold 12px/20px "DejaVu Sans Condensed", sans-serif;
  color: #fff;
  text-shadow: 1px 1px #0a2070;
}
.window-buttons { display: flex; gap: 4px; }
.win-btn {
  width: 20px;
  height: 20px;
  border: 1px solid #d8e6f8;
  border-radius: 3px;
  background: linear-gradient(#84b4e8, #3468c0);
}
.win-close { background: linear-gradient(#f0a080, #d84820 50%, #d86848); }
.site-link {
  position: absolute;
  right: 10px;
  top: 16px;
  font: 20px/24px "Liberation Sans", Arial, sans-serif;
  color: #000090;
  text-decoration: none;
}
.menu {
  display: flex;
  gap: 11px;
  height: 20px;
  padding: 0 5px;
  border-bottom: 1px solid #fff;
}
.tabs {
  display: flex;
  align-items: flex-end;
  gap: 1px;
  height: 24px;
  border-bottom: 1px solid #858585;
}
.tab {
  height: 20px;
  padding: 0 6px;
  border: 1px solid #858585;
  border-bottom: 0;
  border-radius: 3px 3px 0 0;
  background: linear-gradient(#fff 60%, #e8e6ec);
}
.tab-active { height: 23px; margin-bottom: -1px; padding: 0 8px 2px 10px; background: #ebe9ed; }

.page { border: 1px solid #858585; border-top: 0; }
.toolbar { display: flex; height: 26px; }
.tool { width: 27px; height: 26px; }
.tool svg { width: 27px; height: 26px; }
.auto-label { font: bold 16px "Liberation Sans", sans-serif; text-anchor: middle; }
.pressed, .raised, .scroll { background: repeating-conic-gradient(#fff 0 25%, #ebe9ed 0 50%) 0 0 / 2px 2px; }
.pressed { box-shadow: inset 1px 1px #858585, inset -1px -1px #fff; }
.sep { width: 8px; padding: 2px 3px; }
.sep::before { content: ""; display: block; height: 22px; width: 2px; border-left: 1px solid #9a9a9a; border-right: 1px solid #fff; }
.test-pick { display: flex; align-items: center; gap: 4px; margin-left: 50px; }
.test-pick svg { width: 20px; height: 20px; }
.test-pick select { width: 128px; height: 22px; }
select {
  background-image: url("data:image/svg+xml,%3Csvg xmlns='http://www.w3.org/2000/svg' width='7' height='4'%3E%3Cpath d='M0 0h7L4 4H3z'/%3E%3C/svg%3E");
  background-repeat: no-repeat;
  background-position: right 4px center;
}

.scope {
  border: 2px solid #909090;
  border-right-color: #fff;
  border-bottom: 1px solid #d8d8e0;
  border-top: 4px double #909090;
}
.chart { width: 100%; height: auto; }
.chart text { white-space: pre; }
.grid { fill: none; stroke: #585858; stroke-dasharray: 1 4; shape-rendering: crispEdges; }
.axis { fill: none; stroke: #fff; shape-rendering: crispEdges; }
.zero { fill: none; stroke: #fff; stroke-dasharray: 3 2; shape-rendering: crispEdges; }
.marker-one { stroke: #00f; shape-rendering: crispEdges; }
.marker-two { stroke: #800080; shape-rendering: crispEdges; }
.marker-text { font: bold 8px "DejaVu Sans", sans-serif; fill: #fff; text-anchor: middle; }
.frame-edge { stroke: #20208c; fill: none; }
.trace { fill: none; stroke-width: 1; shape-rendering: crispEdges; }
.green { stroke: #0f0; stroke-width: 3; }
.red { stroke: #f00; }
.blue { stroke: #3060ff; }
.scale { font: 9px "DejaVu Sans Condensed", sans-serif; fill: #fff; text-anchor: end; }
.times { font: 9px "DejaVu Sans Condensed", sans-serif; fill: #cfc; text-anchor: middle; }
.channel-name { font: 13px "Liberation Sans", sans-serif; }
.note { font: 16px "Liberation Sans", sans-serif; stroke-width: 2; }
.note text { stroke: none; }
.note .note-big { font-size: 21px; }
.note-green { fill: #00d81c; stroke: #00f020; }
.note-pink { fill: #e80060; stroke: #f00068; }

.timebar { display: flex; height: 18px; }
.small-btn {
  width: 17px;
  height: 18px;
  background: #ebe9ed;
  box-shadow: inset 1px 1px #fff, inset -1px -1px #858585;
}
.small-btn svg { width: 17px; height: 18px; }
.timebar select { background-color: #fff; background-position: right 7px center; padding-left: 2px; font-size: 12px; }
.time-select { width: 68px; }
.zoom-select { width: 65px; }
.scroll { flex: 1; min-width: 0; height: 18px; appearance: none; }
.scroll::-webkit-slider-thumb {
  appearance: none;
  width: 17px;
  height: 18px;
  background: #ebe9ed;
  box-shadow: inset 1px 1px #fff, inset -1px -1px #858585;
}

.panel { padding: 1px 0 2px; }
.splitter {
  display: flex;
  align-items: center;
  gap: 4px;
  width: 574px;
  height: 7px;
  margin: 0 auto;
  padding: 0 4px;
  border: 1px solid #b4b4bc;
}
.caret { border: 3px solid transparent; border-top: 4px solid #3058a8; border-bottom: 0; }
.dots { flex: 1; height: 1px; background: repeating-linear-gradient(90deg, #3058a8 0 1px, transparent 1px 3px); }
.groups { display: flex; justify-content: center; gap: 4px; padding: 9px 1px 0 0; }
.group { height: 71px; border: 1px solid #cbc9cf; border-radius: 4px; }
.channel-group { display: flex; width: 303px; padding-left: 4px; }
.channel-side { width: 204px; }
.channels { display: flex; gap: 1px; width: 216px; margin-top: -6px; padding-right: 4px; background: #ebe9ed; }
.ch {
  width: 26px;
  height: 18px;
  border: 1px solid #003c74;
  background: linear-gradient(#d4d4d6, #bcbcc0);
  font-size: 12px;
}
.ch:disabled { color: #909090; }
.ch-1 { width: 48px; background: linear-gradient(#50ff50, #0f0 40%, #00e800); font-weight: bold; }
.ch-2 { background: linear-gradient(#f44, #f00 40%); }
.ch-4 { background: linear-gradient(#6c94ff, #2858ff); }
.name-row { display: flex; align-items: center; gap: 2px; padding: 6px 0 0 2px; }
.name-box { display: flex; align-items: center; width: 177px; height: 21px; border: 1px solid #0f0; background: #fff; padding-right: 1px; }
.name-box input { flex: 1; min-width: 0; padding-left: 5px; outline: 0; }
.more { width: 17px; height: 17px; background: #ebe9ed; box-shadow: inset 1px 1px #fff, inset -1px -1px #858585; }
.icon-btn { width: 22px; height: 22px; }
.icon-btn svg { width: 22px; height: 22px; }
.view-row { display: flex; gap: 1px; padding: 3px 0 0 5px; }
.knob { height: 62px; margin-top: 7px; overflow: visible; }
.knob-volt { width: 94px; }
.knob-freq { width: 102px; margin: 0; }
.knob-text { font: 28px "DejaVu Sans Condensed", sans-serif; text-anchor: middle; }
.knob-value { font-size: 34px; }
.legend {
  width: max-content;
  margin: -6px 0 0 5px;
  padding: 0 2px;
  background: #ebe9ed;
  font: bold 12px/14px "DejaVu Sans Condensed", sans-serif;
  color: #000080;
}
.legend-off { color: #a8a8ac; }
.legend-blue { color: #2c58a8; }
.freq-group { width: 105px; }
.sync-group { width: 125px; }
.sync-icons { display: flex; gap: 5px; padding: 4px 0 0 10px; }
.sync-row { display: flex; align-items: center; gap: 5px; padding: 4px 0 0 8px; }
.sync-select {
  width: 53px;
  height: 22px;
  padding-left: 5px;
  border: 1px solid #a8a8a8;
  font-size: 12px;
  opacity: 1;
  color: #333;
  background-image: url("data:image/svg+xml,%3Csvg xmlns='http://www.w3.org/2000/svg' width='7' height='4'%3E%3Cpath d='M0 0h7L4 4H3z' fill='%23a0a0a0'/%3E%3C/svg%3E");
  background-position: right 6px center;
}
.squeeze { width: 18px; height: 12px; }
.run-group { width: 134px; }
.run-grid { display: grid; grid-template-columns: 40px 40px 40px; gap: 2px 3px; padding: 2px 0 0 3px; }
.run-btn { height: 28px; border: 1px solid #003c74; border-radius: 2px; background: linear-gradient(#fff 50%, #e4e4ea); }
.run-btn svg { width: 38px; height: 26px; }
.run-btn:disabled { border-color: #c0c0c0; background: none; }
.run-btn.start { grid-column: span 2; display: flex; align-items: center; gap: 18px; padding-left: 10px; font-weight: bold; font-size: 12px; }
.run-btn.start svg { width: 10px; height: 18px; }
.value { align-self: center; text-align: right; font-weight: bold; font-size: 13px; color: #008000; }

.status { display: flex; gap: 3px; padding-top: 2px; }
.cell { height: 16px; padding: 0 4px; border-top: 1px solid #a0a0a0; border-left: 1px solid #a0a0a0; border-right: 1px solid #fff; line-height: 16px; }
.cell:first-child { width: 190px; border-left: 0; }
.cell:last-child { flex: 1; }
.taskbar { height: 4px; border-top: 1px solid #2850a8; background: #7cc0f0; }
.start-edge { display: block; width: 84px; height: 3px; background: #8cd080; }
```
